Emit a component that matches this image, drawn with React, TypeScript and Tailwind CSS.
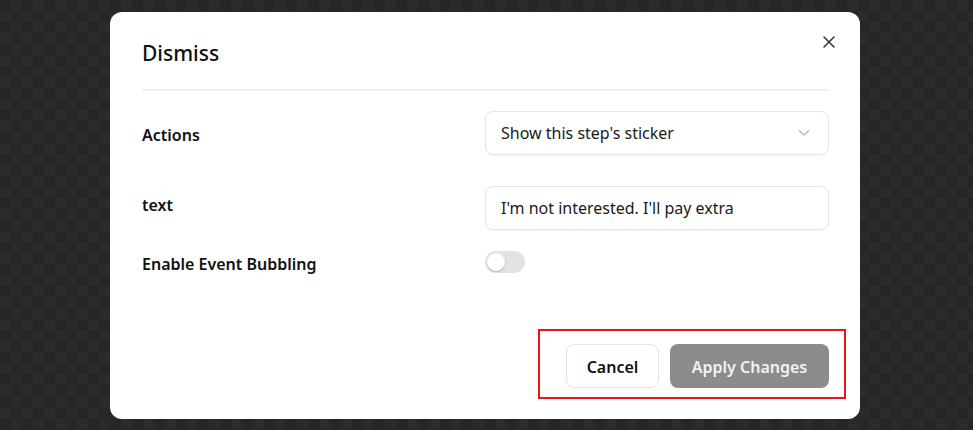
import React, { useState } from 'react';

const App: React.FC = () => {
    const [bubbling, setBubbling] = useState(false);

    return (
        <div
            className="w-[973px] h-[430px] pt-[12px] pl-[110px] bg-[#282828] bg-[repeating-conic-gradient(#2b2b2b_0_25%,#262626_0_50%)] bg-[length:22px_22px]"
            style={{ fontFamily: '"Noto Sans", "Open Sans", sans-serif' }}
        >
            <div className="relative w-[750px] h-[407px] bg-white rounded-[12px] pl-[32px] pr-[31px] pt-[26px] flex flex-col">
                {/* header */}
                <div className="flex items-center justify-between h-[32px]">
                    <h2 className="text-[21px] font-medium text-[#111]">Dismiss</h2>
                </div>
                <button className="absolute top-[22px] right-[23px] w-[16px] h-[16px] flex items-center justify-center text-[#333]">
                    <svg width="14" height="14" viewBox="0 0 14 14" fill="none" stroke="currentColor" strokeWidth="1.5" strokeLinecap="round">
                        <path d="M2 2l10 10M12 2L2 12" />
                    </svg>
                </button>
                <div className="mt-[19px] h-[2px] bg-[#efefef]" />

                {/* form */}
                <div className="grid grid-cols-[343px_1fr] mt-[20px]">
                    <label className="flex items-center pt-[3px] h-[44px] text-[16px] font-semibold text-[#111]">Actions</label>
                    <div className="flex items-center justify-between h-[44px] border border-[#e4e4e4] rounded-[8px] pl-[15px] pr-[18px] shadow-[0_1px_2px_rgba(0,0,0,0.04)]">
                        <span className="text-[16px] text-[#1a1a1a]">Show this step's sticker</span>
                        <svg width="12" height="8" viewBox="0 0 12 8" fill="none" stroke="#b0b0b0" strokeWidth="1.2">
                            <path d="M1 1.5l5 4.5 5-4.5" />
                        </svg>
                    </div>

                    <label className="flex items-start pt-[7px] mt-[31px] h-[44px] text-[16px] font-semibold text-[#111]">text</label>
                    <div className="flex items-center mt-[31px] h-[44px] border border-[#e4e4e4] rounded-[8px] px-[15px] shadow-[0_1px_2px_rgba(0,0,0,0.04)]">
                        <span className="text-[16px] text-[#1a1a1a]">I'm not interested. I'll pay extra</span>
                    </div>

                    <label className="flex items-center pt-[3px] mt-[21px] h-[22px] text-[16px] font-semibold text-[#111]">Enable Event Bubbling</label>
                    <div className="mt-[21px] h-[22px] flex items-center">
                        <button
                            onClick={() => setBubbling(!bubbling)}
                            className="w-[40px] h-[22px] rounded-full bg-[#e3e3e3] p-[2px] flex items-center"
                        >
                            <span className="w-[18px] h-[18px] rounded-full bg-white shadow-[0_1px_2px_rgba(0,0,0,0.2)]" />
                        </button>
                    </div>
                </div>

                {/* footer */}
                <div className="mt-auto mb-[31px] flex justify-end gap-[11px]">
                    <button className="w-[93px] h-[44px] pt-[2px] rounded-[8px] border border-[#e4e4e4] bg-white text-[16px] font-semibold text-[#111]">Cancel</button>
                    <button className="w-[159px] h-[44px] pt-[2px] rounded-[8px] bg-[#8c8c8c] text-[16px] font-semibold text-[#f2f2f2]">Apply Changes</button>
                </div>
                <div className="absolute left-[428px] top-[317px] w-[308px] h-[70px] border-2 border-[#e8161c] pointer-events-none" />
            </div>
        </div>
    );
};

export default App;
